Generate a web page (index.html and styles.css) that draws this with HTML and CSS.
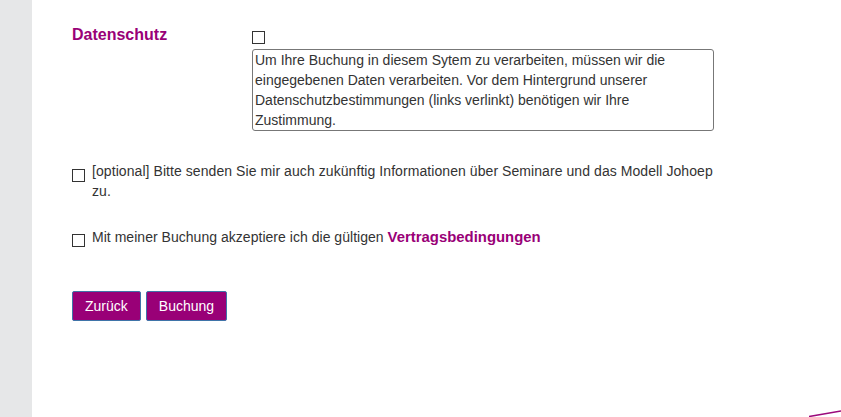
FILE: index.html
```html
<!DOCTYPE html>
<html lang="de">
<head>
    <meta charset="UTF-8">
    <meta name="viewport" content="width=device-width, initial-scale=1.0">
    <title>Buchung</title>
    <link rel="stylesheet" href="styles.css">
</head>
<body>
    <div class="page">
        <div class="sidebar"></div>
        <div class="main">
            <div class="form-row">
                <label class="row-label">Datenschutz</label>
                <div class="row-field">
                    <input type="checkbox" class="check check-top">
                    <div class="info-box">Um Ihre Buchung in diesem Sytem zu verarbeiten, müssen wir die eingegebenen Daten verarbeiten. Vor dem Hintergrund unserer Datenschutzbestimmungen (links verlinkt) benötigen wir Ihre Zustimmung.</div>
                </div>
            </div>

            <div class="check-row first">
                <input type="checkbox" class="check">
                <span>[optional] Bitte senden Sie mir auch zukünftig Informationen über Seminare und das Modell Johoep zu.</span>
            </div>

            <div class="check-row second">
                <input type="checkbox" class="check">
                <span>Mit meiner Buchung akzeptiere ich die gültigen <a href="#" class="link">Vertragsbedingungen</a></span>
            </div>

            <div class="buttons">
                <button class="btn">Zurück</button>
                <button class="btn">Buchung</button>
            </div>
        </div>
    </div>
    <!-- decoration peeking in at the bottom right -->
    <svg class="deco" width="32" height="8" viewBox="0 0 32 8">
        <line x1="0" y1="7.5" x2="32" y2="2" stroke="#9c0a7c" stroke-width="1.6"/>
    </svg>
</body>
</html>
```

FILE: styles.css
```css
* {
    box-sizing: border-box;
    margin: 0;
    padding: 0;
}

html, body {
    height: 100%;
}

body {
    font-family: "Liberation Sans", Arial, sans-serif;
    font-size: 14px;
    color: #333;
    background: #fff;
    overflow: hidden;
    position: relative;
}

.page {
    display: flex;
    min-height: 100%;
}

.sidebar {
    width: 32px;
    background: #e6e7e8;
    flex-shrink: 0;
}

.main {
    padding: 24px 0 0 40px;
    width: 682px;
}

.form-row {
    display: flex;
}

.row-label {
    width: 180px;
    font-size: 16px;
    font-weight: bold;
    color: #990077;
    line-height: 20px;
    padding-top: 1px;
}

.row-field {
    width: 462px;
}

.check {
    appearance: none;
    -webkit-appearance: none;
    width: 13px;
    height: 13px;
    border: 1px solid #333;
    background: #fff;
    border-radius: 0;
    display: block;
    flex-shrink: 0;
}

.check-top {
    margin: 7px 0 5px 0;
}

.info-box {
    border: 1px solid #777;
    border-radius: 3px;
    height: 82px;
    padding: 0 2px;
    line-height: 20px;
}

.check-row {
    display: flex;
    align-items: flex-start;
    line-height: 20px;
    letter-spacing: 0.07px;
}

.check-row .check {
    margin-right: 7px;
}

.check-row.first {
    margin-top: 30px;
}

.check-row.first .check {
    margin-top: 8px;
}

.check-row.second {
    margin-top: 26px;
    letter-spacing: 0.03px;
}

.check-row.second .check {
    margin-top: 7px;
}

.link {
    color: #990077;
    font-size: 14.9px;
    font-weight: bold;
    letter-spacing: 0;
    text-decoration: none;
}

.buttons {
    display: flex;
    gap: 5px;
    margin-top: 44px;
}

.btn {
    font-family: "Liberation Sans", Arial, sans-serif;
    font-size: 14px;
    color: #fff;
    background: #990077;
    border: 1px solid #3f74a8;
    border-radius: 2px;
    height: 30px;
    padding: 0 12px;
}

.deco {
    position: absolute;
    right: 0;
    bottom: 0;
}
```
